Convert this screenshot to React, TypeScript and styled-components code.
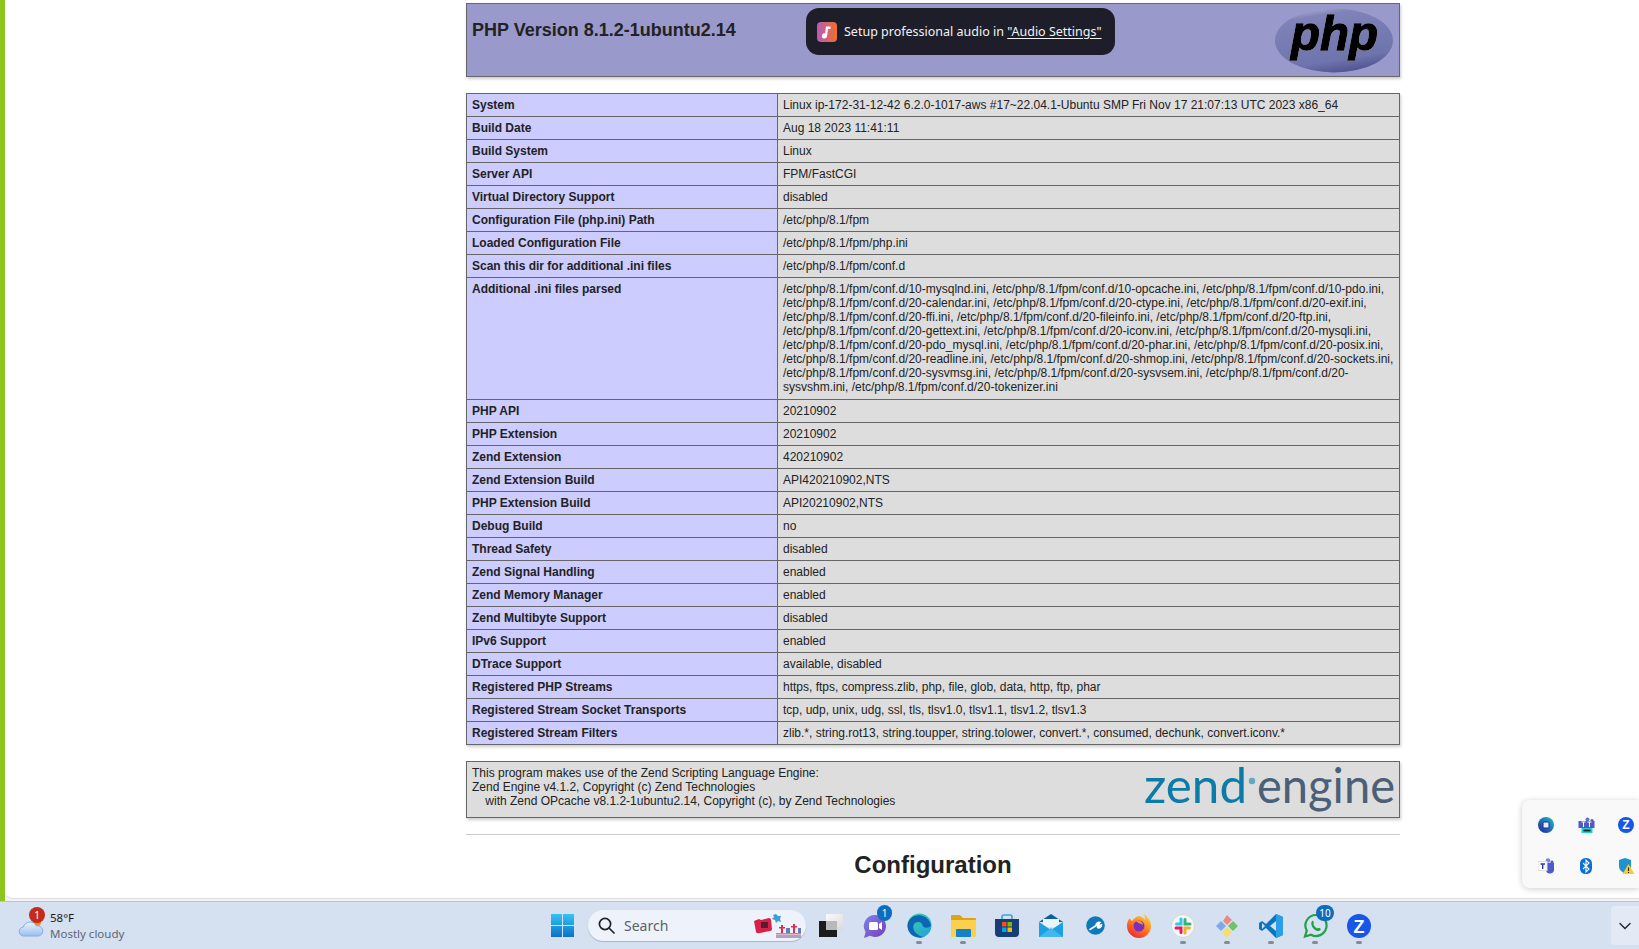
import React from "react";
import styled, { createGlobalStyle } from "styled-components";

const Global = createGlobalStyle`
  html, body { margin: 0; padding: 0; background: #fff; overflow: hidden; }
  * { box-sizing: border-box; }
`;

const Screen = styled.div`
  position: relative;
  width: 1639px;
  height: 949px;
  display: flex;
  flex-direction: column;
  overflow: hidden;
  background: #f3f3f3;
`;
const BrowserRow = styled.div`
  flex: 1;
  min-height: 0;
  display: flex;
  padding-bottom: 2px;
  background: linear-gradient(90deg, #8fc31f 5px, #f3f3f3 5px);
`;
const Viewport = styled.main`
  flex: 1;
  min-width: 0;
  margin-left: 5px;
  padding: 3px 0 0 461px;
  overflow: hidden;
  background: #fff;
  border-bottom: 1px solid #dcdcdc;
  border-bottom-left-radius: 8px;
  color: #222;
  font-family: "Liberation Sans", Arial, sans-serif;
  font-size: 12px;
  line-height: 14px;
`;
const Page = styled.div`
  width: 934px;
`;
const HeaderBox = styled.section`
  position: relative;
  height: 74px;
  padding: 4px 5px;
  background: #99c;
  border: 1px solid #666;
  box-shadow: 1px 2px 3px #ccc;
`;
const Title = styled.h1`
  margin: 12px 0 0;
  font-size: 18px;
  line-height: 21px;
  font-weight: 700;
`;
const PhpLogoWrap = styled.div`
  position: absolute;
  right: 4px;
  top: 4px;
  width: 122px;
  height: 65px;
`;
const Toast = styled.div`
  position: absolute;
  left: 339px;
  top: 4px;
  width: 309px;
  height: 47px;
  display: flex;
  align-items: center;
  gap: 7px;
  padding-left: 11px;
  border-radius: 13px;
  background: #1e1e2a;
  color: #f2f2f2;
  font-family: "Noto Sans", sans-serif;
  font-size: 12.5px;
  white-space: nowrap;
`;
const ToastLink = styled.span`
  text-decoration: underline;
  text-underline-offset: 2px;
`;
const InfoTable = styled.table`
  width: 934px;
  margin-top: 16px;
  border-collapse: collapse;
  table-layout: fixed;
  box-shadow: 1px 2px 3px #ccc;
`;
const KeyCell = styled.td`
  width: 311px;
  padding: 4px 5px;
  border: 1px solid #666;
  background: #ccf;
  font-weight: 700;
  vertical-align: baseline;
`;
const ValueCell = styled.td<{ $tall?: boolean }>`
  padding: 4px 5px ${(p) => (p.$tall ? "5px" : "4px")};
  border: 1px solid #666;
  background: #ddd;
  vertical-align: baseline;
  overflow-wrap: break-word;
`;
const ZendBox = styled.section`
  position: relative;
  height: 57px;
  margin-top: 16px;
  padding: 4px 5px;
  border: 1px solid #666;
  background: #ddd;
  box-shadow: 1px 2px 3px #ccc;
  white-space: pre-wrap;
`;
const ZendLogoWrap = styled.div`
  position: absolute;
  right: 3px;
  top: -7px;
  width: 254px;
  height: 60px;
`;
const Rule = styled.hr`
  width: 934px;
  height: 1px;
  margin: 16px 0 0;
  border: 0;
  background: #ccc;
`;
const SectionTitle = styled.h2`
  margin: 16px 0 0;
  text-align: center;
  font-size: 24px;
  line-height: 28px;
  font-weight: 700;
`;

const Taskbar = styled.footer`
  height: 48px;
  flex: none;
  display: flex;
  align-items: center;
  border-top: 1px solid #b8c2d2;
  background: #d5e0f1;
  font-family: "Noto Sans", sans-serif;
`;
const WeatherArea = styled.div`
  position: relative;
  width: 540px;
  height: 100%;
  flex: none;
  display: flex;
  align-items: center;
  gap: 6px;
  padding-left: 18px;
`;
const WeatherText = styled.div`
  display: flex;
  flex-direction: column;
  font-size: 11.5px;
  line-height: 16px;
  color: #1a1a1a;
`;
const WeatherSub = styled.span`
  color: #5c6675;
`;
const Slot = styled.div<{ $active?: boolean }>`
  position: relative;
  width: 44px;
  height: 100%;
  flex: none;
  display: flex;
  align-items: center;
  justify-content: center;
  &::after {
    content: "";
    display: ${(p) => (p.$active ? "block" : "none")};
    position: absolute;
    left: 19px;
    bottom: 5px;
    width: 6px;
    height: 3px;
    border-radius: 2px;
    background: #858b96;
  }
`;
const SearchPill = styled.div`
  width: 218px;
  height: 31px;
  margin: 0 3px 0 4px;
  flex: none;
  display: flex;
  align-items: center;
  gap: 9px;
  padding: 0 4px 0 10px;
  border-radius: 16px;
  background: #eef3fb;
  box-shadow: 0 1px 1px #aab4c6;
  color: #5c6068;
  font-size: 14px;
`;
const SearchLabel = styled.span`
  flex: 1;
`;
const CountBadge = styled.span<{ $wide?: boolean }>`
  position: absolute;
  top: 3px;
  left: ${(p) => (p.$wide ? "23px" : "24px")};
  width: ${(p) => (p.$wide ? "18px" : "15px")};
  height: 16px;
  display: flex;
  align-items: center;
  justify-content: center;
  border-radius: 9px;
  background: #0f6cbd;
  color: #fff;
  font-size: 10px;
`;
const AlertBadge = styled.span`
  position: absolute;
  left: 29px;
  top: 5px;
  width: 16px;
  height: 16px;
  display: flex;
  align-items: center;
  justify-content: center;
  border-radius: 50%;
  background: #c42b1c;
  color: #fff;
  font-size: 10px;
`;
const Chevron = styled.div`
  margin-left: auto;
  width: 28px;
  height: 39px;
  display: flex;
  align-items: center;
  justify-content: center;
  border-radius: 4px 0 0 4px;
  background: #e3eaf6;
`;
const TrayPopup = styled.aside`
  position: absolute;
  right: 0;
  top: 800px;
  width: 117px;
  height: 88px;
  display: grid;
  grid-template-columns: repeat(3, 40px);
  grid-auto-rows: 41px;
  padding: 4px 0 0 4px;
  border-radius: 8px 0 0 8px;
  background: #f9f9f9;
  box-shadow: 0 1px 6px rgba(0, 0, 0, 0.2);
`;
const TrayCell = styled.div`
  display: flex;
  align-items: center;
  justify-content: center;
`;

const PhpLogo = () => (
  <svg width="122" height="65" viewBox="0 0 122 65">
    <defs>
      <linearGradient id="phpBg" x1="0.3" y1="0" x2="0.6" y2="1">
        <stop offset="0" stopColor="#a9acd2" />
        <stop offset="0.12" stopColor="#7f83b9" />
        <stop offset="0.8" stopColor="#7074ad" />
        <stop offset="1" stopColor="#4e5290" />
      </linearGradient>
    </defs>
    <ellipse cx="61" cy="32.5" rx="59" ry="32" fill="url(#phpBg)" />
    <text x="18" y="42" fontFamily="'Liberation Sans', sans-serif" fontWeight="700" fontStyle="italic" fontSize="48" textLength="87" lengthAdjust="spacingAndGlyphs" fill="#000" stroke="#000" strokeWidth="1.3" style={{ filter: "drop-shadow(0 0 0.7px #fff)" }}>php</text>
  </svg>
);

const ZendLogo = () => (
  <svg width="254" height="60" viewBox="0 0 254 60">
    <text x="2" y="48" fontFamily="Lato, sans-serif" fontWeight="400" fontSize="48" textLength="103" lengthAdjust="spacingAndGlyphs" fill="#0b7ba8">zend</text>
    <circle cx="110" cy="26" r="3.200" fill="#5fa9c6" />
    <text x="115" y="48" fontFamily="Lato, sans-serif" fontWeight="400" fontSize="48" textLength="138" lengthAdjust="spacingAndGlyphs" fill="#4a5f78">engine</text>
  </svg>
);

const MusicIcon = () => (
  <svg width="20" height="20" viewBox="0 0 20 20" style={{ flex: "none" }}>
    <defs>
      <linearGradient id="mus" x1="0" x2="1">
        <stop offset="0" stopColor="#b85ab8" />
        <stop offset="1" stopColor="#f0702a" />
      </linearGradient>
    </defs>
    <rect width="20" height="20" rx="4" fill="url(#mus)" />
    <path d="M9 4.500h4.500v2.600H11l-.9 7a2.600 2.600 0 1 1-1.900-2.700z" fill="#fff" />
  </svg>
);

const CloudIcon = () => (
  <svg width="26" height="22" viewBox="0 0 26 22">
    <defs>
      <linearGradient id="cl" x1="0" x2="0" y1="0" y2="1">
        <stop offset="0" stopColor="#eaf3fd" />
        <stop offset="1" stopColor="#9cbfec" />
      </linearGradient>
    </defs>
    <circle cx="19" cy="7" r="4" fill="#f08a24" />
    <path d="M6 21a4.500 4.500 0 0 1-.6-9 7 7 0 0 1 13-1 5 5 0 0 1 2.400 10z" fill="url(#cl)" stroke="#82aee6" strokeWidth="1" />
  </svg>
);

const WinIcon = () => (
  <svg width="23" height="23" viewBox="0 0 23 23">
    <defs>
      <linearGradient id="win" x1="0" y1="0" x2="0" y2="1">
        <stop offset="0" stopColor="#35c3f3" />
        <stop offset="1" stopColor="#0a72c9" />
      </linearGradient>
    </defs>
    <path d="M0 0h11v11H0zM12 0h11v11H12zM0 12h11v11H0zM12 12h11v11H12z" fill="url(#win)" />
  </svg>
);
const SearchGlass = () => (
  <svg width="17" height="17" viewBox="0 0 17 17" fill="none" stroke="#20242a" strokeWidth="1.700" style={{ flex: "none" }}>
    <circle cx="7" cy="7" r="5.600" />
    <path d="M11 11l5 5" strokeLinecap="round" />
  </svg>
);
const SearchDeco = () => (
  <svg width="50" height="26" viewBox="0 0 50 26" style={{ flex: "none" }}>
    <path d="M2 8l5-2 2 1 8-2q2 0 2 2l1 9q0 2-2 2l-10 2q-3 1-4-1z" fill="#d8214a" />
    <rect x="9" y="9" width="7" height="6" fill="#5b1c2e" />
    <path d="M21 2l3-1 2 2 3 0-1 3 1 3-3-1-2 2-1-3-3-1 2-2z" fill="#3e9fd4" />
    <path d="M24 20h25v1.500H24z" fill="#c9848f" />
    <path d="M24 22h25v3H24z" fill="#8d7fb4" opacity="0.7" />
    <path d="M29 12h2v8h-2zM27 14h6v1.500h-6zM41 11h2v9h-2zM39 13h6v1.500h-6z" fill="#d8314f" />
    <path d="M34 15h4v5h-4zM46 15h3v5h-3z" fill="#6a7ab8" />
  </svg>
);
const TaskViewIcon = () => (
  <svg width="24" height="24" viewBox="0 0 24 24">
    <defs>
      <linearGradient id="tv" x1="0" y1="0" x2="1" y2="1">
        <stop offset="0" stopColor="#fbfbfb" />
        <stop offset="1" stopColor="#d9d9d9" />
      </linearGradient>
    </defs>
    <rect x="7" y="0" width="17" height="16" rx="1" fill="url(#tv)" />
    <rect x="0" y="7" width="18" height="16" fill="#1c1c1c" />
    <rect x="7" y="7" width="11" height="9" fill="#b9b9b9" />
  </svg>
);
const ChatIcon = () => (
  <svg width="26" height="26" viewBox="0 0 26 26">
    <defs>
      <linearGradient id="cha" x1="0" y1="0" x2="1" y2="1">
        <stop offset="0" stopColor="#7b83eb" />
        <stop offset="1" stopColor="#7a3bb5" />
      </linearGradient>
    </defs>
    <path d="M13 2a11 11 0 1 1-5 20.800L2 25l1.600-6A11 11 0 0 1 13 2z" fill="url(#cha)" />
    <rect x="7" y="9" width="9" height="8" rx="1.500" fill="#fff" />
    <path d="M17 11l3-2v8l-3-2z" fill="#fff" />
  </svg>
);
const EdgeIcon = () => (
  <svg width="25" height="25" viewBox="0 0 25 25">
    <defs>
      <linearGradient id="ed1" x1="0" y1="0" x2="1" y2="1">
        <stop offset="0" stopColor="#41d29a" />
        <stop offset="1" stopColor="#1e9fe0" />
      </linearGradient>
    </defs>
    <circle cx="12.500" cy="12.500" r="12" fill="url(#ed1)" />
    <path d="M.5 12.500C1 5 8 1 14 2.500c5 1 9 5 10 10-2 3-8 3-8.500-.5C15 9 11 8 8 10c-3 2.500-2 8 2 11 2 2 5 3 8 2.500-2 1-4 1.500-6 1C5 24 .5 19 .5 12.500z" fill="#0c65b5" />
  </svg>
);
const FolderIcon = () => (
  <svg width="25" height="23" viewBox="0 0 25 23">
    <path d="M0 2a1 1 0 0 1 1-1h8l3 3h12a1 1 0 0 1 1 1v3H0z" fill="#dea416" />
    <path d="M0 6h25v16a1 1 0 0 1-1 1H1a1 1 0 0 1-1-1z" fill="#fbd04e" />
    <rect x="5" y="15" width="15" height="8" rx="1" fill="#1482c9" />
  </svg>
);
const StoreIcon = () => (
  <svg width="24" height="24" viewBox="0 0 24 24">
    <path d="M7 5V3a2 2 0 0 1 2-2h6a2 2 0 0 1 2 2v2" fill="none" stroke="#36a5dc" strokeWidth="1.600" />
    <path d="M0 5h24v14a4 4 0 0 1-4 4H4a4 4 0 0 1-4-4z" fill="#153f76" />
    <path d="M7 8h4.500v4.500H7z" fill="#f25022" />
    <path d="M12.500 8H17v4.500h-4.500z" fill="#7fba00" />
    <path d="M7 13.500h4.500V18H7z" fill="#00a4ef" />
    <path d="M12.500 13.500H17V18h-4.500z" fill="#ffb900" />
  </svg>
);
const MailIcon = () => (
  <svg width="24" height="23" viewBox="0 0 24 23">
    <path d="M0 8L12 0l12 8z" fill="#0b5f9c" />
    <path d="M4 5h16v8H4z" fill="#e9f4fb" />
    <path d="M0 8l12 8 12-8v15H0z" fill="#1d9fe3" />
    <path d="M0 23l12-9 12 9z" fill="#40b7ee" />
  </svg>
);
const WrenchIcon = () => (
  <svg width="19" height="19" viewBox="0 0 19 19">
    <circle cx="9.500" cy="9.500" r="9.300" fill="#0f77bb" />
    <path d="M4 13.500l5.500-3.500M10 9.500c0-2 1.500-3.500 4-3l-1.500 1.800 1 1.200 2-.6c0 2-2 3.500-4 2.700" fill="#fff" stroke="#fff" strokeWidth="1.600" strokeLinecap="round" />
  </svg>
);
const FirefoxIcon = () => (
  <svg width="24" height="24" viewBox="0 0 24 24">
    <defs>
      <linearGradient id="ff" x1="0.8" y1="0" x2="0.2" y2="1">
        <stop offset="0" stopColor="#ffd23a" />
        <stop offset="0.5" stopColor="#ff7a1f" />
        <stop offset="1" stopColor="#e6223f" />
      </linearGradient>
    </defs>
    <path d="M17 0c5 4 7 8 7 12a12 12 0 0 1-24 0C0 9 1 6 2.500 4.500L5 7c2-2.500 4-4 7-5 3 .5 5 2 6 4 0-2-.2-4-1-6z" fill="url(#ff)" />
    <circle cx="12" cy="12" r="5.500" fill="#7b2fc0" />
    <path d="M9 7c4-1 7 1 7 4-2-1.500-5-1.500-7-4z" fill="#f89a2e" />
  </svg>
);
const SlackIcon = () => (
  <svg width="24" height="24" viewBox="0 0 24 24">
    <circle cx="12" cy="12" r="11.500" fill="#f6f6f6" stroke="#d6d6d6" />
    <g strokeWidth="3" strokeLinecap="round" fill="none">
      <path d="M10 5v5H5.500" stroke="#36c5f0" />
      <path d="M19 10h-5V5.500" stroke="#2eb67d" />
      <path d="M14 19v-5h4.500" stroke="#ecb22e" />
      <path d="M5 14h5v4.500" stroke="#e01e5a" />
    </g>
  </svg>
);
const GemsIcon = () => (
  <svg width="24" height="24" viewBox="0 0 24 24">
    <path d="M6 7l5 5-5 5-5-5z" fill="#7aa9ec" />
    <path d="M12 1l5 5-5 5-4-4z" fill="#ec8a86" />
    <path d="M18 7l5 5-5 5-5-5z" fill="#6cc36c" />
    <path d="M12 13l5 5-5 6-5-6z" fill="#f7dd70" />
  </svg>
);
const VSCodeIcon = () => (
  <svg width="24" height="24" viewBox="0 0 24 24">
    <path d="M17 0l7 3v18l-7 3-10-10-4 3-3-2v-6l3-2 4 3z" fill="#0a76bd" />
    <path d="M17 0l7 3v18l-7 3z" fill="#2b9fe6" />
    <path d="M17 7l-6 5 6 5z" fill="#d5e0f1" />
    <path d="M3 9l3 3-3 3z" fill="#d5e0f1" />
  </svg>
);
const WhatsappIcon = () => (
  <svg width="25" height="25" viewBox="0 0 25 25">
    <path d="M13 2a10.500 10.500 0 1 1-5 19.700L2 23.500l1.800-5.800A10.500 10.500 0 0 1 13 2z" fill="#d5e0f1" stroke="#25a04a" strokeWidth="2.200" />
    <path d="M9 8c2-1 2 3 1.500 3.500 1 2 2 3 4 4 .5-1 4-.5 3 1.500-1.500 2-4 1-6-.5S7 11 9 8z" fill="#25a04a" />
  </svg>
);
const ZoomIcon = ({ size = 24 }: { size?: number }) => (
  <svg width={size} height={size} viewBox="0 0 24 24">
    <circle cx="12" cy="12" r="12" fill="#1756e8" />
    <text x="12" y="18.500" textAnchor="middle" fontFamily="'Liberation Sans', sans-serif" fontWeight="700" fontSize="18" fill="#fff">Z</text>
  </svg>
);
const OutlookDot = () => (
  <svg width="16" height="16" viewBox="0 0 16 16">
    <defs>
      <linearGradient id="od" x1="1" y1="0" x2="0" y2="1">
        <stop offset="0" stopColor="#19c2c9" />
        <stop offset="1" stopColor="#24209c" />
      </linearGradient>
    </defs>
    <circle cx="8" cy="8" r="8" fill="url(#od)" />
    <rect x="5" y="5" width="6" height="6" rx="1" fill="#e9ecf8" stroke="#1c2a9b" />
  </svg>
);
const TeamsBem = () => (
  <svg width="17" height="16" viewBox="0 0 16 16">
    <circle cx="9" cy="2.500" r="2" fill="#6870c4" />
    <circle cx="13.500" cy="3.500" r="1.600" fill="#5059c9" />
    <path d="M0 4h16v7H0z" fill="#5059c9" />
    <path d="M3 5h4M5 5v5M9 5h4M11 5v5" stroke="#fff" fill="none" />
    <rect x="3" y="11" width="11" height="5" fill="#1fd0c8" />
    <path d="M5 13.500h7" stroke="#123" strokeWidth="1.800" />
  </svg>
);
const TeamsIcon = () => (
  <svg width="16" height="16" viewBox="0 0 16 16">
    <circle cx="10" cy="2.500" r="2.300" fill="#7b83eb" />
    <circle cx="14" cy="4" r="1.600" fill="#5059c9" />
    <path d="M7 5h9v6a4 4 0 0 1-8 1z" fill="#5059c9" />
    <rect x="0" y="3.500" width="9" height="9" fill="#fff" stroke="#ddd" />
    <path d="M2.500 6h4.500M4.700 6v5" stroke="#343a8f" strokeWidth="1.400" fill="none" />
  </svg>
);
const BluetoothIcon = () => (
  <svg width="12" height="16" viewBox="0 0 12 16">
    <rect width="12" height="16" rx="5.500" fill="#0a6fd8" />
    <path d="M3 5l6 6-3 3V2l3 3-6 6" fill="none" stroke="#fff" strokeWidth="1.100" />
  </svg>
);
const ShieldIcon = () => (
  <svg width="16" height="16" viewBox="0 0 16 16">
    <path d="M7 0l6 2v6c0 4-3 6-6 7.500C4 14 1 12 1 8V2z" fill="#1f92d4" />
    <path d="M10.500 6L16.500 16H4.500z" fill="#ffcb1f" />
    <path d="M10.500 9.500v3.500M10.500 14v1" stroke="#222" strokeWidth="1.100" />
  </svg>
);
const ChevronGlyph = () => (
  <svg width="12" height="8" viewBox="0 0 12 8" fill="none" stroke="#20242a" strokeWidth="1.400">
    <path d="M1 1.500l5 5 5-5" strokeLinecap="round" />
  </svg>
);

const iniFiles = ["10-mysqlnd", "10-opcache", "10-pdo", "20-calendar", "20-ctype", "20-exif", "20-ffi", "20-fileinfo", "20-ftp", "20-gettext", "20-iconv", "20-mysqli", "20-pdo_mysql", "20-phar", "20-posix", "20-readline", "20-shmop", "20-sockets", "20-sysvmsg", "20-sysvsem", "20-sysvshm", "20-tokenizer"]
  .map((n) => `/etc/php/8.1/fpm/conf.d/${n}.ini`)
  .join(", ");

const rows: [string, string][] = [
  ["System", "Linux ip-172-31-12-42 6.2.0-1017-aws #17~22.04.1-Ubuntu SMP Fri Nov 17 21:07:13 UTC 2023 x86_64"],
  ["Build Date", "Aug 18 2023 11:41:11"],
  ["Build System", "Linux"],
  ["Server API", "FPM/FastCGI"],
  ["Virtual Directory Support", "disabled"],
  ["Configuration File (php.ini) Path", "/etc/php/8.1/fpm"],
  ["Loaded Configuration File", "/etc/php/8.1/fpm/php.ini"],
  ["Scan this dir for additional .ini files", "/etc/php/8.1/fpm/conf.d"],
  ["Additional .ini files parsed", iniFiles],
  ["PHP API", "20210902"],
  ["PHP Extension", "20210902"],
  ["Zend Extension", "420210902"],
  ["Zend Extension Build", "API420210902,NTS"],
  ["PHP Extension Build", "API20210902,NTS"],
  ["Debug Build", "no"],
  ["Thread Safety", "disabled"],
  ["Zend Signal Handling", "enabled"],
  ["Zend Memory Manager", "enabled"],
  ["Zend Multibyte Support", "disabled"],
  ["IPv6 Support", "enabled"],
  ["DTrace Support", "available, disabled"],
  ["Registered PHP Streams", "https, ftps, compress.zlib, php, file, glob, data, http, ftp, phar"],
  ["Registered Stream Socket Transports", "tcp, udp, unix, udg, ssl, tls, tlsv1.0, tlsv1.1, tlsv1.2, tlsv1.3"],
  ["Registered Stream Filters", "zlib.*, string.rot13, string.toupper, string.tolower, convert.*, consumed, dechunk, convert.iconv.*"],
];

export default function App() {
  return (
    <Screen>
      <Global />
      <BrowserRow>
        <Viewport>
          <Page>
            <HeaderBox>
              <Title>PHP Version 8.1.2-1ubuntu2.14</Title>
              <PhpLogoWrap><PhpLogo /></PhpLogoWrap>
              <Toast>
                <MusicIcon />
                <span>Setup professional audio in <ToastLink>"Audio Settings"</ToastLink></span>
              </Toast>
            </HeaderBox>
            <InfoTable>
              <tbody>
                {rows.map(([k, v]) => (
                  <tr key={k}>
                    <KeyCell>{k}</KeyCell>
                    <ValueCell $tall={v === iniFiles}>{v}</ValueCell>
                  </tr>
                ))}
              </tbody>
            </InfoTable>
            <ZendBox>
              <ZendLogoWrap><ZendLogo /></ZendLogoWrap>
              {"This program makes use of the Zend Scripting Language Engine:\nZend Engine v4.1.2, Copyright (c) Zend Technologies\n    with Zend OPcache v8.1.2-1ubuntu2.14, Copyright (c), by Zend Technologies"}
            </ZendBox>
            <Rule />
            <SectionTitle>Configuration</SectionTitle>
          </Page>
        </Viewport>
      </BrowserRow>
      <Taskbar>
        <WeatherArea>
          <CloudIcon />
          <AlertBadge>1</AlertBadge>
          <WeatherText>
            <span>58°F</span>
            <WeatherSub>Mostly cloudy</WeatherSub>
          </WeatherText>
        </WeatherArea>
        <Slot><WinIcon /></Slot>
        <SearchPill>
          <SearchGlass />
          <SearchLabel>Search</SearchLabel>
          <SearchDeco />
        </SearchPill>
        <Slot><TaskViewIcon /></Slot>
        <Slot><ChatIcon /><CountBadge>1</CountBadge></Slot>
        <Slot $active><EdgeIcon /></Slot>
        <Slot $active><FolderIcon /></Slot>
        <Slot><StoreIcon /></Slot>
        <Slot><MailIcon /></Slot>
        <Slot><WrenchIcon /></Slot>
        <Slot><FirefoxIcon /></Slot>
        <Slot $active><SlackIcon /></Slot>
        <Slot $active><GemsIcon /></Slot>
        <Slot $active><VSCodeIcon /></Slot>
        <Slot $active><WhatsappIcon /><CountBadge $wide>10</CountBadge></Slot>
        <Slot $active><ZoomIcon /></Slot>
        <Chevron><ChevronGlyph /></Chevron>
      </Taskbar>
      <TrayPopup>
        <TrayCell><OutlookDot /></TrayCell>
        <TrayCell><TeamsBem /></TrayCell>
        <TrayCell><ZoomIcon size={16} /></TrayCell>
        <TrayCell><TeamsIcon /></TrayCell>
        <TrayCell><BluetoothIcon /></TrayCell>
        <TrayCell><ShieldIcon /></TrayCell>
      </TrayPopup>
    </Screen>
  );
}
